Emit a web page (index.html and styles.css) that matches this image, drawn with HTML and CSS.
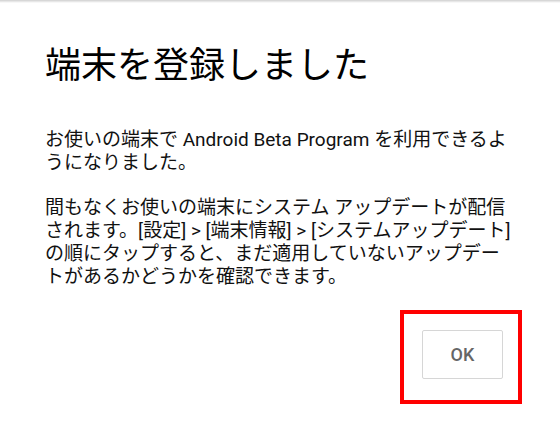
FILE: index.html
```html
<!DOCTYPE html>
<html lang="ja">
<head>
  <meta charset="UTF-8">
  <title>端末を登録しました</title>
  <meta name="viewport" content="width=device-width, initial-scale=1.0">
  <link rel="stylesheet" href="styles.css">
</head>
<body>

  <div class="shade"></div>

  <div class="dialog">
    <h1 class="title">端末を登録しました</h1>

    <div class="message">
      <p>お使いの端末で Android Beta Program を利用できるようになりました。</p>
      <p>間もなくお使いの端末にシステム アップデートが配信されます。[設定] &gt; [端末情報] &gt; [システムアップデート] の順にタップすると、まだ適用していないアップデートがあるかどうかを確認できます。</p>
    </div>

    <div class="actions">
      <div class="highlight">
        <button class="btn">OK</button>
      </div>
    </div>
  </div>

</body>
</html>
```

FILE: styles.css
```css
body {
  margin: 0;
  padding: 0;
  background: #fff;
  font-family: Roboto, "Noto Sans CJK JP", sans-serif;
  color: #000;
}

.shade {
  height: 3px;
  background: linear-gradient(#cfcfcf, #fff);
}

.dialog {
  padding: 38px 0 0 45px;
}

.title {
  margin: 0 0 45px;
  font-family: "Noto Sans CJK JP", sans-serif;
  font-size: 36px;
  font-weight: normal;
  line-height: 42px;
  color: #000;
}

.message {
  width: 470px;
  font-size: 19px;
  line-height: 23px;
  color: #111;
}

.message p {
  margin: 0 0 22px;
}

.message p:last-child {
  margin-bottom: 0;
}

.actions {
  display: flex;
  justify-content: flex-end;
  margin-top: 22px;
  padding-right: 38px;
}

.highlight {
  border: 4px solid #ff0000;
  padding: 16px 15px 21px 18px;
}

.btn {
  display: block;
  width: 81px;
  height: 49px;
  padding: 0;
  background: #fff;
  border: 1px solid #d6d6d6;
  border-radius: 2px;
  font-family: Roboto, sans-serif;
  font-size: 18px;
  font-weight: 500;
  color: #666;
  cursor: pointer;
}
```
